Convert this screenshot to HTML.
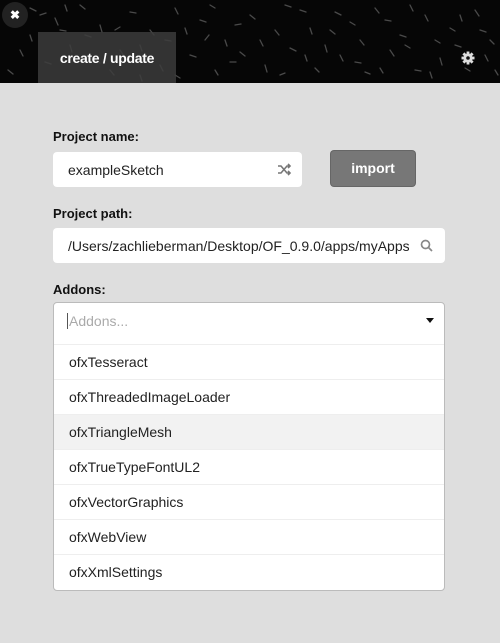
<!DOCTYPE html><html><head><style>
body{margin:0;width:500px;height:643px;background:#dedede;font-family:"Liberation Sans",sans-serif;position:relative;overflow:hidden}
.hdr{position:absolute;left:0;top:0;width:500px;height:83px;background:#060606;overflow:hidden}
.tab{position:absolute;left:38px;top:32px;width:138px;height:51px;background:rgba(60,60,60,0.85);color:#fff;font-size:14px;font-weight:bold;line-height:52px;text-align:center;letter-spacing:-0.3px}
.close{position:absolute;left:2px;top:2px;width:26px;height:26px;border-radius:50%;background:#222;color:#fff;font-size:12px;font-weight:bold;text-align:center;line-height:26px}
.lbl{position:absolute;left:53px;font-size:13px;font-weight:bold;color:#111}
.inp{position:absolute;background:#fff;border-radius:4px;font-size:14px;color:#222;box-sizing:border-box;padding-left:15px;white-space:nowrap;overflow:hidden}
.btn{position:absolute;left:331px;top:151px;width:84px;height:35px;background:#777;border-radius:3px;color:#fff;font-weight:bold;font-size:14px;text-align:center;line-height:35px;box-shadow:0 0 0 1px #666}
.dd{position:absolute;left:53px;top:302px;width:392px;height:289px;background:#fff;border:1px solid #bbb;border-radius:4px;box-sizing:border-box;overflow:hidden}
.row{height:34px;line-height:34px;padding-left:15px;font-size:14px;color:#222;border-top:1px solid #eee}
</style></head><body>
<div class="hdr">
<svg width="500" height="83" style="position:absolute;left:0;top:0" stroke="#4a4a4a" stroke-width="1.3" stroke-linecap="round">
<path d="M10 20l4 6M30 8l6 3M55 18l3 7M80 5l5 4M100 25l2 7M130 12l6 1M150 30l4 5M175 8l3 6M200 20l6 2M225 40l2 6M250 15l5 4M275 30l4 5M300 10l6 2M325 45l2 7M350 22l5 3M375 8l4 5M400 35l6 2M425 15l3 6M450 28l5 3M475 10l4 6M490 40l4 4"/>
<path d="M20 50l3 6M45 62l6 2M70 45l2 7M95 60l5 3M120 50l4 6M190 55l6 2M215 70l3 5M240 52l5 4M265 65l2 7M290 48l6 3M315 68l4 4M340 55l3 6M365 72l5 2M390 50l4 6M415 70l6 1M440 58l2 7M465 68l5 3M485 55l3 6M8 70l5 4M30 35l2 6M60 30l6 1M160 65l3 6"/>
<path d="M40 15l6-2M65 5l2 6M115 30l5-3M140 45l2 6M165 40l6 1M185 28l2 6M210 5l5 3M235 25l6-1M260 40l3 6M285 5l6 2M310 28l2 6M335 12l6 3M360 40l4 5M385 20l6 1M410 5l3 6M435 40l5 3M460 15l2 6M480 30l6 2M175 75l5 3M205 40l4-5M230 62l6 0M280 75l5-2M305 55l2 6M330 30l5 4M355 62l6 1M380 68l3 5M405 45l5 3M430 72l2 6M455 45l6 2M495 70l3 5M140 75l2 6M85 35l6 2M110 70l4 5"/>
</svg>
<div class="close">✖</div>
<div class="tab">create / update</div>
<svg style="position:absolute;left:461px;top:51px" width="14" height="14" viewBox="0 0 14 14"><g fill="#ddd"><circle cx="7" cy="7" r="4.6"/><rect x="5.6" y="0.5" width="2.8" height="13"/><rect x="0.5" y="5.6" width="13" height="2.8"/><rect x="5.6" y="0.5" width="2.8" height="13" transform="rotate(45 7 7)"/><rect x="5.6" y="0.5" width="2.8" height="13" transform="rotate(-45 7 7)"/></g><circle cx="7" cy="7" r="1.8" fill="#111"/></svg>
</div>
<div class="lbl" style="top:129px">Project name:</div>
<div class="inp" style="left:53px;top:152px;width:249px;height:35px;line-height:36px">exampleSketch
<svg style="position:absolute;right:10px;top:11px" width="14" height="13" viewBox="0 0 14 13" fill="none" stroke="#777" stroke-width="1.6"><path d="M0 3h3l6 7h3M0 10h3l6-7h3M10 1l2 2-2 2M10 8l2 2-2 2"/></svg></div>
<div class="btn">import</div>
<div class="lbl" style="top:206px">Project path:</div>
<div class="inp" style="left:53px;top:228px;width:392px;height:35px;line-height:36px"><span style="display:inline-block;width:341px;overflow:hidden;vertical-align:top">/Users/zachlieberman/Desktop/OF_0.9.0/apps/myApps</span>
<svg style="position:absolute;right:12px;top:11px" width="13" height="13" viewBox="0 0 13 13" fill="none" stroke="#888" stroke-width="1.7"><circle cx="5.5" cy="5.5" r="4"/><path d="M8.5 8.5l3.5 3.5"/></svg></div>
<div class="lbl" style="top:282px">Addons:</div>
<div class="dd">
<div style="height:41px;line-height:36px;padding-left:13px;font-size:14px;color:#aaa;position:relative"><span style="border-left:1px solid #555;padding-left:1px">Addons...</span>
<div style="position:absolute;right:10px;top:15px;border-left:4px solid transparent;border-right:4px solid transparent;border-top:5px solid #111"></div></div>
<div class="row">ofxTesseract</div>
<div class="row">ofxThreadedImageLoader</div>
<div class="row" style="background:#f2f2f2">ofxTriangleMesh</div>
<div class="row">ofxTrueTypeFontUL2</div>
<div class="row">ofxVectorGraphics</div>
<div class="row">ofxWebView</div>
<div class="row">ofxXmlSettings</div>
</div>
</body></html>
